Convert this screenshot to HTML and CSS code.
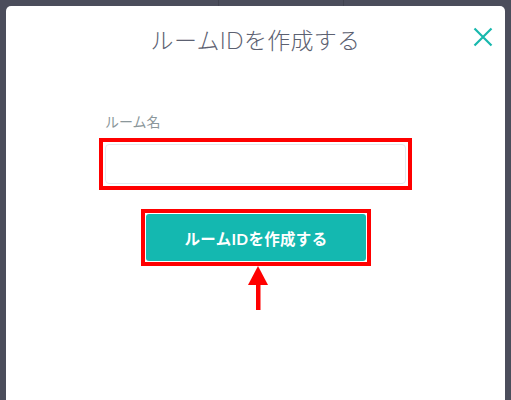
FILE: index.html
```html
<!DOCTYPE html>
<html lang="ja">
<head>
<meta charset="utf-8">
<link rel="stylesheet" href="styles.css">
</head>
<body>
<div class="backdrop">
  <div class="modal">
    <div class="header">
      <h1 class="title">ルームIDを作成する</h1>
      <button class="close" aria-label="閉じる">
        <svg width="20" height="20" viewBox="0 0 20 20"><path d="M1.5 1.5 L18.5 18.5 M18.5 1.5 L1.5 18.5" stroke="#17b8ad" stroke-width="2.2" fill="none"/></svg>
      </button>
    </div>
    <div class="form">
      <label class="label">ルーム名</label>
      <div class="frame input-frame">
        <div class="input"></div>
      </div>
      <div class="btn-row">
        <div class="frame btn-frame">
          <div class="btn">ルームIDを作成する</div>
        </div>
        <svg class="arrow" width="20" height="44" viewBox="0 0 20 44"><polygon points="10,0 20,19 0,19" fill="#ff0000"/><rect x="8" y="18" width="4.5" height="26" fill="#ff0000"/></svg>
      </div>
    </div>
  </div>
</div>
</body>
</html>
```
FILE: styles.css
```css
html, body {
  margin: 0;
  padding: 0;
  height: 100%;
  overflow: hidden;
}
body {
  background-color: #4b4d5b;
  font-family: Lato, "Noto Sans CJK JP", sans-serif;
}
.backdrop {
  height: 100%;
  padding: 6px 6px 0 6px;
  box-sizing: border-box;
  background-image:
    linear-gradient(to right, transparent 218px, #41434f 218px, #41434f 219px, transparent 219px),
    linear-gradient(to right, transparent 343px, #41434f 343px, #41434f 344px, transparent 344px);
}
.modal {
  background: #ffffff;
  border-radius: 5px 5px 0 0;
  height: 100%;
  position: relative;
}
.header {
  padding-top: 18px;
  display: flex;
  justify-content: center;
}
.title {
  margin: 0;
  font-size: 23px;
  line-height: 32px;
  font-weight: 300;
  color: #5c6171;
  letter-spacing: 0.3px;
}
.close {
  position: absolute;
  top: 21px;
  right: 12px;
  width: 20px;
  height: 20px;
  padding: 0;
  border: 0;
  background: none;
  display: flex;
}
.form {
  width: 313px;
  margin: 56px auto 0;
  display: flex;
  flex-direction: column;
}
.label {
  padding-left: 6px;
  font-size: 14px;
  line-height: 19px;
  color: #8b979b;
  margin-bottom: 7px;
}
.frame {
  border: 4px solid #ff0000;
  background: #fff;
}
.input-frame {
  padding: 2px;
}
.input {
  height: 38px;
  border: 1px solid #e3e9ef;
  border-radius: 4px;
}
.btn-row {
  margin-top: 19px;
  display: flex;
  flex-direction: column;
  align-items: center;
}
.btn-frame {
  padding: 1px;
  margin-left: 1px;
}
.btn {
  width: 220px;
  height: 47px;
  background: #14b8b0;
  border-radius: 3px;
  color: #ffffff;
  font-weight: 700;
  font-size: 15.5px;
  display: flex;
  align-items: center;
  justify-content: center;
  letter-spacing: 0.3px;
}
.arrow {
  display: block;
  margin-left: 5px;
}
```
